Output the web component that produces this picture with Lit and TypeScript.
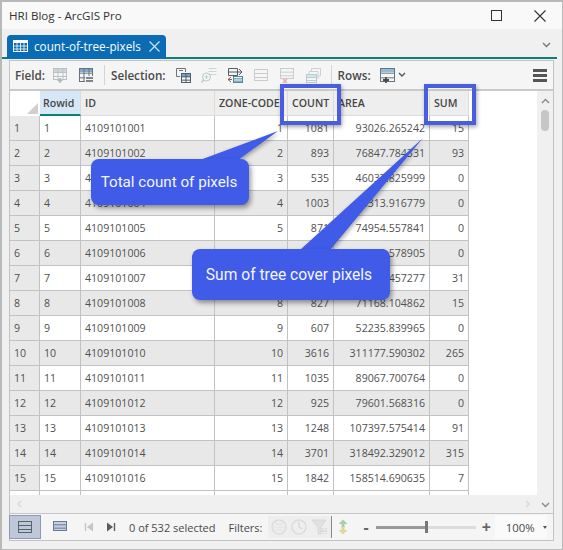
import { LitElement, html, css, svg } from "lit";

type Row = [string, string, string, string];
const DATA: Row[] = [
  ["4109101001", "1081", "93026.265242", "15"],
  ["4109101002", "893", "76847.784331", "93"],
  ["4109101003", "535", "46037.825999", "0"],
  ["4109101004", "1003", "86313.916779", "0"],
  ["4109101005", "871", "74954.557841", "0"],
  ["4109101006", "512", "44061.578905", "0"],
  ["4109101007", "1290", "111012.457277", "31"],
  ["4109101008", "827", "71168.104862", "15"],
  ["4109101009", "607", "52235.839965", "0"],
  ["4109101010", "3616", "311177.590302", "265"],
  ["4109101011", "1035", "89067.700764", "0"],
  ["4109101012", "925", "79601.568316", "0"],
  ["4109101013", "1248", "107397.575414", "91"],
  ["4109101014", "3701", "318492.329012", "315"],
  ["4109101016", "1842", "158514.690635", "7"],
];

const ic = (body: unknown, w = 16, h = 16) =>
  html`<svg class="ic" width=${w} height=${h} viewBox="0 0 ${w} ${h}" fill="none">${body}</svg>`;

const grid = (x: number, y: number, w: number, h: number, c: string, head?: string) => svg`
  ${head ? svg`<rect x=${x} y=${y} width=${w} height="4" fill=${head}/>` : ""}
  <rect x=${x + 0.5} y=${y + 0.5} width=${w - 1} height=${h - 1} stroke=${c}/>
  <path d="M${x} ${y + h / 3 + 0.5}H${x + w}M${x} ${y + (2 * h) / 3 + 0.5}H${x + w}" stroke=${c}/>`;

const I = {
  addField: ic(svg`${grid(1, 1, 14, 12, "#bcc1c5", "#ccd6dc")}<path d="M6 1V13M11 1V13" stroke="#bcc1c5"/><path d="M8 11V16M5.5 13.5H10.5" stroke="#b0b8bb" stroke-width="1.6"/>`),
  calcField: ic(svg`${grid(1, 1, 14, 14, "#69727a", "#7fa9cf")}<path d="M6 1V15M11 1V15" stroke="#69727a"/><rect x="7" y="9" width="9" height="7" fill="#f3f3f3"/><path d="M8 11H15M8 14H15" stroke="#596168" stroke-width="1.3"/>`),
  selAttr: ic(svg`<path d="M1.5 1.5H10.5V5M1.5 1.5V9.5H5" stroke="#6c757c"/><path d="M4 3.5H8" stroke="#6c757c"/>${grid(6, 6, 10, 10, "#525e67", "#6aa6d6")}<path d="M11 6V16" stroke="#525e67"/>`),
  selZoom: ic(svg`<path d="M7.5 1.5H15.5M7.5 4.5H15.5M7.5 7.5H15.5" stroke="#ced2d6"/><circle cx="5.5" cy="10" r="4" stroke="#b4cfbc"/><path d="M3.5 10H7.5M5.5 8V12" stroke="#bfd0c4"/><path d="M2.5 13L0.5 15.5" stroke="#c0c4c7" stroke-width="1.5"/>`),
  switchSel: ic(svg`<path d="M1.5 1.5H10.5V8.5H1.5ZM1.5 5H10.5" stroke="#525d66"/><path d="M12 2L15 5L12 8" stroke="#525d66"/><path d="M11 5H15" stroke="#525d66"/><path d="M4 10L1 12.5L4 15M1 12.5H5" stroke="#9c5a46"/>${grid(6, 9, 10, 7, "#4a8aa2")}`),
  clearSel: ic(svg`${grid(1, 2, 14, 12, "#c8cccf")}`),
  delSel: ic(svg`${grid(1, 1, 14, 11, "#c8cccf")}<path d="M4 12L8 16M8 12L4 16" stroke="#e6aea5" stroke-width="1.4"/>`),
  copySel: ic(svg`<path d="M6.5 4V1.5H15.5V9H13" stroke="#cdd1d4"/><path d="M4 7V4.5H13V12" stroke="#cdd1d4"/>${grid(1, 7, 11, 9, "#b1cfd5", "#d5e7ea")}`),
  rows: ic(svg`${grid(1, 1, 15, 14, "#69747c", "#8fbcdc")}<path d="M7 10V16M4 13H10" stroke="#454d54" stroke-width="1.8"/>`, 17, 17),
  rowsAll: ic(svg`${grid(1, 2, 14, 12, "#56636e")}`, 16, 16),
  rowsSel: ic(svg`<rect x="1" y="1" width="14" height="10" fill="#c4cfe4"/>${grid(1, 1, 14, 10, "#6a7a96")}`, 16, 12),
  first: ic(svg`<path d="M1.5 2V10" stroke="#c6c6c6" stroke-width="1.4"/><path d="M9 1.5V10.5L3 6Z" fill="#c6c6c6"/>`, 10, 12),
  last: ic(svg`<path d="M1 1.5V10.5L7 6Z" fill="#5c5c5c"/><path d="M8.5 2V10" stroke="#5c5c5c" stroke-width="1.4"/>`, 10, 12),
  filterExt: ic(svg`<circle cx="8" cy="8" r="7" stroke="#dadcdc" stroke-width="1.4"/><path d="M1 8H15M4 3.5C6 6 10 6 12 3.5M4 12.5C6 10 10 10 12 12.5" stroke="#e0e2e2"/>`),
  filterTime: ic(svg`<circle cx="8" cy="8" r="7" stroke="#dadcdc" stroke-width="1.4"/><path d="M8 3V8L11.5 10" stroke="#d6d8d8" stroke-width="1.2"/>`),
  filterDef: ic(svg`<path d="M1 1H15L10 8V15H7V8Z" fill="#e0e2e2" stroke="#d6d8d8"/><path d="M12 9V15M15 9V15M10 12H16" stroke="#ccd0d2" stroke-dasharray="1.5 1"/>`),
  sync: ic(svg`<path d="M6 .5L1.5 5H4.5V8.5H7.5V5H10.5Z" fill="#a8d0a8"/><path d="M6 15.5L1.5 11H4.5V8H7.5V11H10.5Z" fill="#e0d896"/>`, 12, 16),
};

const chev = (d: string, c: string, w = 9, h = 6) =>
  html`<svg class="ic" width=${w} height=${h} viewBox="0 0 ${w} ${h}" fill="none"><path d=${d} stroke=${c} stroke-width="1.4"/></svg>`;

export class AppRoot extends LitElement {
  static styles = css`
    :host {
      display: block;
      width: 563px;
      height: 550px;
      position: relative;
      overflow: hidden;
      font-family: "Open Sans", "Noto Sans", sans-serif;
      font-size: 10.6px;
      color: #444;
    }
    .win {
      box-sizing: border-box;
      width: 563px;
      height: 550px;
      border: 1px solid #b9b9b9;
      border-left-width: 2px;
      border-top-width: 2px;
      background: #f0f0f0;
      display: flex;
      flex-direction: column;
    }
    .ic { display: block; flex: none; }
    .title {
      height: 27px;
      flex: none;
      background: #f9f9f9;
      display: flex;
      align-items: center;
      padding: 0 16px 0 7px;
      font-size: 11.6px;
      color: #333;
    }
    .title .t { flex: 1; }
    .title .max { margin-right: 32px; }
    .strip {
      height: 30px;
      flex: none;
      box-sizing: border-box;
      margin-right: 5px;
      border-bottom: 2px solid #0a8079;
      display: flex;
      align-items: flex-end;
      padding-left: 5px;
      position: relative;
    }
    .tab {
      width: 159px;
      height: 24px;
      margin-bottom: -2px;
      box-sizing: border-box;
      background: #0a6cb4;
      border-radius: 4px 4px 0 0;
      color: #fff;
      display: flex;
      align-items: center;
      padding: 0 6px 2px 6px;
      gap: 6px;
      font-size: 11.7px;
    }
    .tab span { flex: 1; white-space: nowrap; }
    .tabmore { position: absolute; right: 6px; bottom: 9px; }
    .panel {
      width: 545px;
      margin: 1px 0 0 7px;
      flex: none;
      box-sizing: border-box;
      border: 1px solid #c3c3c3;
      background: #f5f5f5;
      display: flex;
      flex-direction: column;
    }
    .toolbar {
      height: 30px;
      box-sizing: border-box;
      border-bottom: 2px solid #c9c9c9;
      display: flex;
      align-items: center;
      padding-left: 5px;
      font-weight: 600;
      font-size: 11.7px;
      color: #4a4a4a;
    }
    .tgroup { display: flex; align-items: center; gap: 10px; }
    .sep { width: 1px; height: 20px; background: #d4d4d4; margin: 0 6px 0 10px; }
    .lab-field { margin-right: -3px; }
    .lab-sel { margin-right: -1px; }
    .lab-rows { margin-right: -2px; }
    .burger { margin-left: auto; margin-right: 6px; }
    .rowchev { margin-left: 2px; }
    .body { display: flex; height: 422px; }
    .left { width: 527px; display: flex; flex-direction: column; }
    .view { height: 404px; overflow: hidden; background: #fff; }
    .table {
      display: grid;
      grid-template-columns: 30px 41px 134px 73px 46px 96px 39px;
      grid-auto-rows: 25px;
      width: 459px;
    }
    .c {
      box-sizing: border-box;
      border-right: 1px solid #c2c2c2;
      border-bottom: 1px solid #c2c2c2;
      padding: 0 4px;
      display: flex;
      align-items: center;
      white-space: nowrap;
      overflow: hidden;
      background: #fff;
      color: #505050;
    }
    .n { justify-content: flex-end; }
    .alt { background: #e8e8e8; }
    .rh { background: #e9e9e9; padding-left: 4px; }
    .hd {
      background: #eeeeee;
      font-weight: 600;
      color: #454545;
      border-right-color: #dcdcdc;
      border-bottom: 1px solid #dcdcdc;
      overflow: hidden;
    }
    .corner { background: #fff; justify-content: flex-end; align-items: flex-end; padding: 0 2px 2px 0; border: 0; }
    .sel { background: #d6e8f6; border-bottom: 2px solid #0a8079; padding-left: 3px; }
    .hscroll {
      height: 18px;
      background: #f0f0f0;
      display: flex;
      align-items: center;
      justify-content: space-between;
      padding: 0 7px;
    }
    .vscroll {
      width: 16px;
      background: #f0f0f0;
      display: flex;
      flex-direction: column;
      align-items: center;
      padding: 7px 0 5px;
      box-sizing: border-box;
    }
    .thumb { width: 8px; height: 21px; background: #c6c6c6; border-radius: 4px; margin-top: 6px; }
    .vscroll .end { margin-top: auto; }
    .status {
      height: 27px;
      box-sizing: border-box;
      border-top: 1px solid #c6c6c6;
      display: flex;
      align-items: center;
      font-size: 11px;
      color: #4a4a4a;
    }
    .active {
      width: 32px;
      height: 24px;
      box-sizing: border-box;
      margin-left: -1px;
      background: #bfc8d9;
      border: 1px solid #8d9ab3;
      display: flex;
      align-items: center;
      justify-content: center;
    }
    .rsel { margin: -3px 0 0 11px; }
    .first { margin-left: 16px; }
    .last { margin-left: 12px; }
    .count { margin-left: 13px; }
    .filters { margin-left: 13px; }
    .disabled {
      margin-left: 5px;
      width: 64px;
      height: 22px;
      background: #eeeeee;
      display: flex;
      align-items: center;
      justify-content: space-around;
      padding: 0 2px;
      box-sizing: border-box;
      border-right: 1px solid #8a8a8a;
    }
    .sync { margin-left: 5px; }
    .zbtn { font-size: 16px; font-weight: 700; color: #666; line-height: 16px; }
    .minus { margin-left: 15px; }
    .slider { margin-left: 7px; width: 100px; height: 12px; position: relative; display: flex; align-items: center; }
    .track { flex: 1; height: 3px; background: linear-gradient(90deg, #9a9a9a 50%, #dcdcdc 50%); }
    .knob { position: absolute; left: 49px; top: 0; width: 3px; height: 12px; background: #777; }
    .plus { margin-left: 6px; }
    .zoom {
      margin-left: 4px;
      width: 52px;
      height: 24px;
      background: #fafafa;
      display: flex;
      align-items: center;
      justify-content: space-between;
      padding: 0 0 0 11px;
      box-sizing: border-box;
      font-size: 11.4px;
    }
    .caret { width: 0; height: 0; border: 2.5px solid transparent; border-top: 3px solid #555; border-bottom: 0; }
    .frame {
      position: absolute;
      top: 84px;
      height: 41px;
      box-sizing: border-box;
      border: 4px solid #4a5ddf;
      box-shadow: 1px 2px 4px rgba(0, 0, 0, 0.35);
    }
    .f1 { left: 280px; width: 61px; }
    .f2 { left: 424px; width: 52px; }
    .tails { position: absolute; left: 0; top: 0; filter: drop-shadow(1px 2px 2px rgba(0, 0, 0, 0.35)); }
    .call {
      position: absolute;
      box-sizing: border-box;
      background: #3f5be8;
      border-radius: 8px;
      color: #f4f6ff;
      font-family: Roboto, "Liberation Sans", sans-serif;
      display: flex;
      align-items: center;
      justify-content: center;
      white-space: nowrap;
      box-shadow: 2px 3px 5px rgba(0, 0, 0, 0.4);
    }
    .c1 { left: 91px; top: 159px; width: 158px; height: 46px; font-size: 15.2px; padding: 0 2px 1px 0; }
    .c2 { left: 192px; top: 249px; width: 198px; height: 51px; font-size: 15.6px; padding-right: 4px; }
  `;

  render() {
    const headers = ["Rowid", "ID", "ZONE-CODE", "COUNT", "AREA", "SUM"];
    return html`
      <div class="win">
        <div class="title">
          <span class="t">HRI Blog - ArcGIS Pro</span>
          <svg class="ic max" width="11" height="11" viewBox="0 0 11 11" fill="none"><rect x=".5" y=".5" width="10" height="10" stroke="#333"/></svg>
          <svg class="ic" width="12" height="12" viewBox="0 0 12 12" fill="none"><path d="M.5 .5L11.5 11.5M11.5 .5L.5 11.5" stroke="#333" stroke-width="1.1"/></svg>
        </div>
        <div class="strip">
          <div class="tab">
            <svg class="ic" width="15" height="12" viewBox="0 0 15 12" fill="none"><rect x=".5" y=".5" width="14" height="11" stroke="#fff"/><rect x="0" y="0" width="15" height="3" fill="#fff"/><path d="M0 6H15M0 9H15M4 0V12M7.5 0V12M11 0V12" stroke="#fff" stroke-width=".8"/></svg>
            <span>count-of-tree-pixels</span>
            <svg class="ic" width="11" height="11" viewBox="0 0 11 11" fill="none"><path d="M.5 .5L10.5 10.5M10.5 .5L.5 10.5" stroke="#cfe3f3" stroke-width="1.2"/></svg>
          </div>
          <div class="tabmore">${chev("M1 1L4.5 4.5L8 1", "#777")}</div>
        </div>
        <div class="panel">
          <div class="toolbar">
            <div class="tgroup">
              <span class="lab-field">Field:</span>${I.addField}${I.calcField}
            </div>
            <div class="sep"></div>
            <div class="tgroup">
              <span class="lab-sel">Selection:</span>${I.selAttr}${I.selZoom}${I.switchSel}${I.clearSel}${I.delSel}${I.copySel}
            </div>
            <div class="sep"></div>
            <div class="tgroup">
              <span class="lab-rows">Rows:</span>${I.rows}
            </div>
            <div class="rowchev">${chev("M1 1L4 4L7 1", "#555", 8, 6)}</div>
            <svg class="ic burger" width="14" height="13" viewBox="0 0 14 13"><path d="M0 0H14V3H0ZM0 5H14V8H0ZM0 10H14V13H0Z" fill="#555"/></svg>
          </div>
          <div class="body">
            <div class="left">
              <div class="view">
                <div class="table">
                  <div class="c corner"><svg class="ic" width="11" height="11" viewBox="0 0 11 11"><path d="M11 0V11H0Z" fill="#d0d0d0"/></svg></div>
                  ${headers.map((h, i) => html`<div class="c hd ${i === 0 ? "sel" : ""}">${h}</div>`)}
                  ${DATA.map((r, i) => {
                    const a = i % 2 === 1 ? "alt" : "";
                    return html`
                      <div class="c rh">${i + 1}</div>
                      <div class="c ${a}">${i + 1}</div>
                      <div class="c ${a}">${r[0]}</div>
                      <div class="c n ${a}">${i + 1}</div>
                      <div class="c n ${a}">${r[1]}</div>
                      <div class="c n ${a}">${r[2]}</div>
                      <div class="c n ${a}">${r[3]}</div>`;
                  })}
                  ${[0, 1, 2, 3, 4, 5, 6].map(() => html`<div class="c"></div>`)}
                </div>
              </div>
              <div class="hscroll">
                ${chev("M4 1L1 4L4 7", "#d8d8d8", 5, 8)}
                ${chev("M1 1L4 4L1 7", "#d8d8d8", 5, 8)}
              </div>
            </div>
            <div class="vscroll">
              ${chev("M1 5L4.5 1.5L8 5", "#888")}
              <div class="thumb"></div>
              <div class="end">${chev("M1 1L4.5 4.5L8 1", "#888")}</div>
            </div>
          </div>
          <div class="status">
            <div class="active">${I.rowsAll}</div>
            <div class="rsel">${I.rowsSel}</div>
            <div class="first">${I.first}</div>
            <div class="last">${I.last}</div>
            <span class="count">0 of 532 selected</span>
            <span class="filters">Filters:</span>
            <div class="disabled">${I.filterExt}${I.filterTime}${I.filterDef}</div>
            <div class="sync">${I.sync}</div>
            <span class="zbtn minus">-</span>
            <div class="slider"><div class="track"></div><div class="knob"></div></div>
            <span class="zbtn plus">+</span>
            <div class="zoom"><span>100%</span><div class="caret"></div></div>
          </div>
        </div>
      </div>
      <div class="frame f1"></div>
      <div class="frame f2"></div>
      <svg class="tails" width="563" height="550" viewBox="0 0 563 550">
        <path d="M200 160L278 131L238 160Z" fill="#3f5be8"/>
        <path d="M300 250L423 138L330 250Z" fill="#3f5be8"/>
      </svg>
      <div class="call c1">Total count of pixels</div>
      <div class="call c2">Sum of tree cover pixels</div>
    `;
  }
}
customElements.define("app-root", AppRoot);
